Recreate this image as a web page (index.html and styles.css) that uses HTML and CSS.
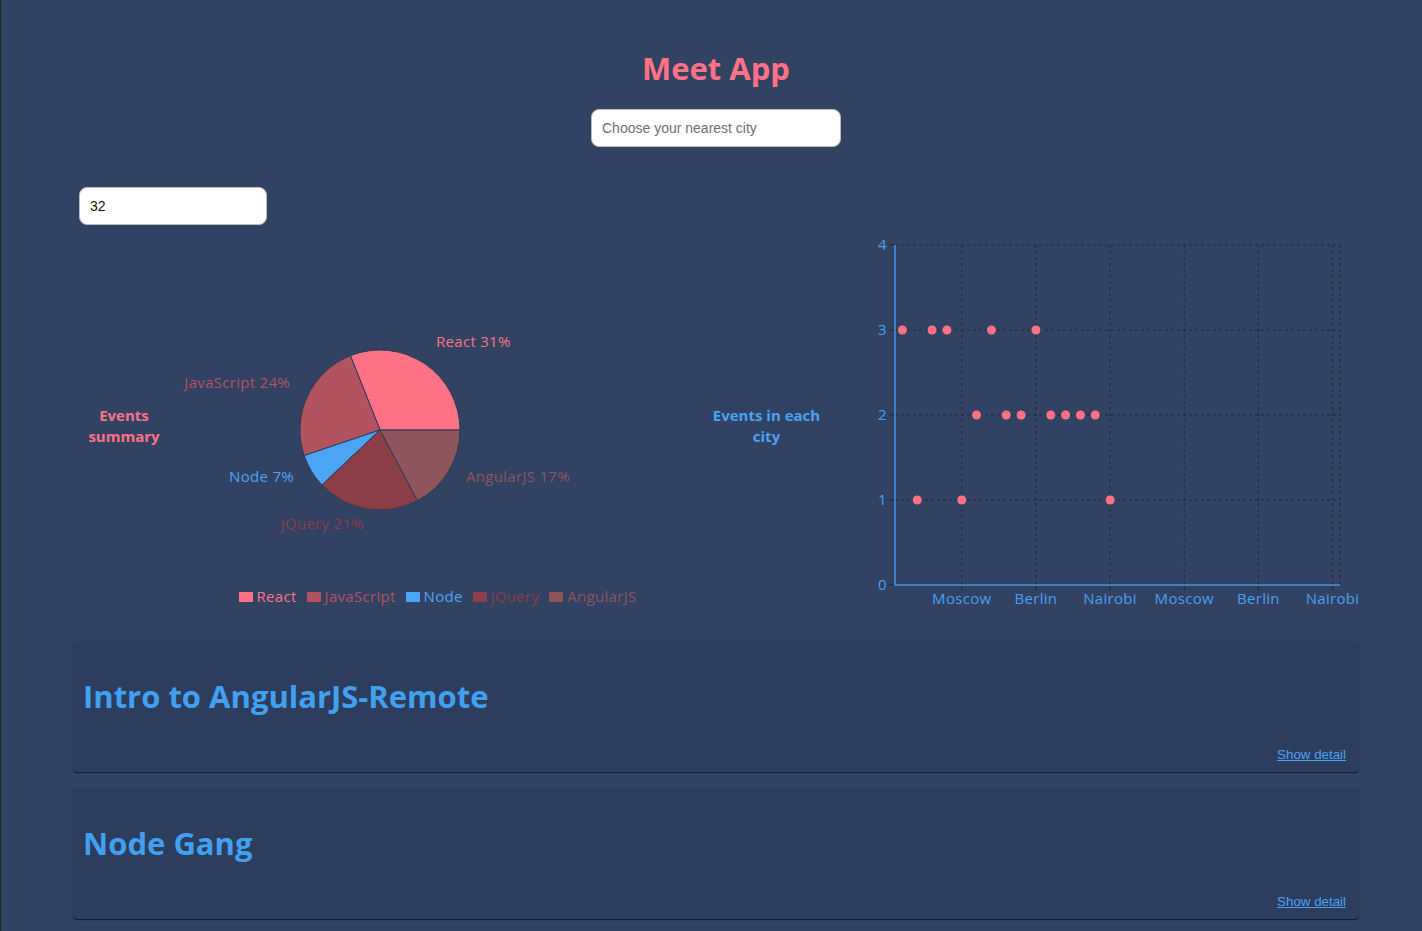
FILE: index.html
```html
<!DOCTYPE html>
<html lang="en">
<head>
<meta charset="utf-8">
<title>Meet App</title>
<link rel="stylesheet" href="styles.css">
</head>
<body>
<div class="app">
  <h1 class="app-title">Meet App</h1>
  <div class="city-search">
    <input class="city" type="text" placeholder="Choose your nearest city">
  </div>
  <div class="number-of-events">
    <input class="number" type="text" value="32">
  </div>

  <div class="charts">
    <div class="chart-block chart-block-left">
      <div class="chart-label label-pink">Events summary</div>
      <div class="pie-chart">
        <svg class="pie-svg" width="537" height="361" viewBox="0 0 537 361">
          <g class="slices" stroke="#2d3c58" stroke-width="1">
            <path d="M205,205 L285,205 A80,80 0 0 0 175.39,130.68 Z" fill="#ff7285"/>
            <path d="M205,205 L175.39,130.68 A80,80 0 0 0 129.19,230.54 Z" fill="#b3535f"/>
            <path d="M205,205 L129.19,230.54 A80,80 0 0 0 146.92,260.02 Z" fill="#4aa5f5"/>
            <path d="M205,205 L146.92,260.02 A80,80 0 0 0 242.47,275.68 Z" fill="#8b3d48"/>
            <path d="M205,205 L242.47,275.68 A80,80 0 0 0 285,205 Z" fill="#8f555d"/>
          </g>
          <g class="pie-labels">
            <text x="261" y="116" text-anchor="start" dominant-baseline="central" fill="#ff7285">React 31%</text>
            <text x="115" y="157" text-anchor="end" dominant-baseline="central" fill="#b3535f">JavaScript 24%</text>
            <text x="119" y="251" text-anchor="end" dominant-baseline="central" fill="#4aa5f5">Node 7%</text>
            <text x="189" y="298" text-anchor="end" dominant-baseline="central" fill="#8b3d48">jQuery 21%</text>
            <text x="291" y="251" text-anchor="start" dominant-baseline="central" fill="#8f555d">AngularJS 17%</text>
          </g>
        </svg>
        <ul class="legend">
          <li class="legend-item c-react"><span class="swatch"></span>React</li>
          <li class="legend-item c-js"><span class="swatch"></span>JavaScript</li>
          <li class="legend-item c-node"><span class="swatch"></span>Node</li>
          <li class="legend-item c-jquery"><span class="swatch"></span>jQuery</li>
          <li class="legend-item c-angular"><span class="swatch"></span>AngularJS</li>
        </ul>
      </div>
    </div>

    <div class="chart-block chart-block-right">
      <div class="chart-label label-blue">Events in each city</div>
      <svg class="scatter-svg" width="536" height="400" viewBox="0 0 536 400">
        <g class="grid" stroke="#1b2232" stroke-opacity="0.75" stroke-dasharray="3 3" stroke-width="1">
          <line x1="72" y1="20" x2="517" y2="20"/>
          <line x1="72" y1="105" x2="517" y2="105"/>
          <line x1="72" y1="190" x2="517" y2="190"/>
          <line x1="72" y1="275" x2="517" y2="275"/>
          <line x1="138.75" y1="20" x2="138.75" y2="360"/>
          <line x1="212.92" y1="20" x2="212.92" y2="360"/>
          <line x1="287.08" y1="20" x2="287.08" y2="360"/>
          <line x1="361.25" y1="20" x2="361.25" y2="360"/>
          <line x1="435.42" y1="20" x2="435.42" y2="360"/>
          <line x1="509.58" y1="20" x2="509.58" y2="360"/>
          <line x1="517" y1="20" x2="517" y2="360"/>
        </g>
        <g class="ticks" stroke="#1b2232" stroke-opacity="0.75" stroke-width="1">
          <line x1="66" y1="20" x2="72" y2="20"/>
          <line x1="66" y1="105" x2="72" y2="105"/>
          <line x1="66" y1="190" x2="72" y2="190"/>
          <line x1="66" y1="275" x2="72" y2="275"/>
          <line x1="66" y1="360" x2="72" y2="360"/>
          <line x1="138.75" y1="360" x2="138.75" y2="366"/>
          <line x1="212.92" y1="360" x2="212.92" y2="366"/>
          <line x1="287.08" y1="360" x2="287.08" y2="366"/>
          <line x1="361.25" y1="360" x2="361.25" y2="366"/>
          <line x1="435.42" y1="360" x2="435.42" y2="366"/>
          <line x1="509.58" y1="360" x2="509.58" y2="366"/>
        </g>
        <g class="axes" stroke="#3d7fc8" stroke-width="2">
          <line x1="72" y1="20" x2="72" y2="361"/>
          <line x1="71" y1="360" x2="517" y2="360"/>
        </g>
        <g class="axis-text y-text" fill="#4aa0ee" text-anchor="end">
          <text x="64" y="20" dy="0.355em">4</text>
          <text x="64" y="105" dy="0.355em">3</text>
          <text x="64" y="190" dy="0.355em">2</text>
          <text x="64" y="275" dy="0.355em">1</text>
          <text x="64" y="360" dy="0.355em">0</text>
        </g>
        <g class="axis-text x-text" fill="#4aa0ee" text-anchor="middle">
          <text x="138.75" y="368" dy="0.71em">Moscow</text>
          <text x="212.92" y="368" dy="0.71em">Berlin</text>
          <text x="287.08" y="368" dy="0.71em">Nairobi</text>
          <text x="361.25" y="368" dy="0.71em">Moscow</text>
          <text x="435.42" y="368" dy="0.71em">Berlin</text>
          <text x="509.58" y="368" dy="0.71em">Nairobi</text>
        </g>
        <g class="points" fill="#ff7285">
          <circle cx="79.42" cy="105" r="4.5"/>
          <circle cx="94.25" cy="275" r="4.5"/>
          <circle cx="109.08" cy="105" r="4.5"/>
          <circle cx="123.92" cy="105" r="4.5"/>
          <circle cx="138.75" cy="275" r="4.5"/>
          <circle cx="153.58" cy="190" r="4.5"/>
          <circle cx="168.42" cy="105" r="4.5"/>
          <circle cx="183.25" cy="190" r="4.5"/>
          <circle cx="198.08" cy="190" r="4.5"/>
          <circle cx="212.92" cy="105" r="4.5"/>
          <circle cx="227.75" cy="190" r="4.5"/>
          <circle cx="242.58" cy="190" r="4.5"/>
          <circle cx="257.42" cy="190" r="4.5"/>
          <circle cx="272.25" cy="190" r="4.5"/>
          <circle cx="287.08" cy="275" r="4.5"/>
        </g>
      </svg>
    </div>
  </div>

  <ul class="event-list">
    <li class="event">
      <h2 class="event-title">Intro to AngularJS-Remote</h2>
      <div class="event-actions"><a class="details-link" href="#">Show detail</a></div>
    </li>
    <li class="event">
      <h2 class="event-title">Node Gang</h2>
      <div class="event-actions"><a class="details-link" href="#">Show detail</a></div>
    </li>
  </ul>
</div>
</body>
</html>
```
FILE: styles.css
```css
html {
  background: #314263;
}

body {
  margin: 0;
  padding: 0 0 0 10px;
  min-height: 100vh;
  background: #314263;
  box-shadow: inset 1px 0 0 #1f2226;
  font-family: "Open Sans", "Lato", sans-serif;
}

.app {
  width: 1286px;
  margin: 0 auto;
}

.app-title {
  margin: 48px 0 21px;
  font-size: 31px;
  line-height: 40px;
  font-weight: 700;
  color: #ff7286;
  text-align: center;
}

.city-search {
  display: flex;
  justify-content: center;
}

.city,
.number {
  box-sizing: border-box;
  height: 38px;
  padding: 0 10px;
  border: 1px solid #b9bcc2;
  border-radius: 8px;
  background: #fff;
  font-family: "Liberation Sans", Arial, sans-serif;
  font-size: 14px;
  color: #111;
  outline: none;
}

.city {
  width: 250px;
}

.city::placeholder {
  color: #6f6f6f;
}

.number-of-events {
  margin-top: 40px;
  padding-left: 6px;
}

.number {
  width: 188px;
}

.charts {
  display: flex;
  height: 400px;
}

.chart-block {
  display: flex;
  align-items: center;
}

.chart-block-left {
  width: 637px;
}

.chart-block-right {
  width: 649px;
}

.chart-label {
  flex: none;
  font-size: 15px;
  line-height: 21px;
  font-weight: 700;
  text-align: center;
  margin-top: 2px;
}

.chart-block-left .chart-label {
  width: 102px;
}

.chart-block-right .chart-label {
  width: 113px;
}

.label-pink {
  color: #ff7286;
}

.label-blue {
  color: #4aa3f2;
}

.pie-chart {
  align-self: flex-start;
  display: flex;
  flex-direction: column;
  width: 535px;
}

.pie-svg,
.scatter-svg {
  display: block;
  font-family: "Open Sans", "Lato", sans-serif;
  font-size: 15px;
  letter-spacing: 0.3px;
}

.legend {
  display: flex;
  justify-content: center;
  margin: 0;
  padding: 0 10px 0 0;
  list-style: none;
  font-size: 15px;
  letter-spacing: 0.3px;
  line-height: 20px;
}

.legend-item {
  display: flex;
  align-items: center;
  margin-right: 10px;
}

.legend-item:last-child {
  margin-right: 0;
}

.swatch {
  width: 14px;
  height: 10px;
  margin-right: 4px;
  margin-top: 1px;
}

.c-react { color: #ff7285; }
.c-react .swatch { background: #ff7285; }
.c-js { color: #b3535f; }
.c-js .swatch { background: #b3535f; }
.c-node { color: #4aa5f5; }
.c-node .swatch { background: #4aa5f5; }
.c-jquery { color: #8b3d48; }
.c-jquery .swatch { background: #8b3d48; }
.c-angular { color: #8f555d; }
.c-angular .swatch { background: #8f555d; }

.event-list {
  margin: 16px 0 0;
  padding: 0;
  list-style: none;
}

.event {
  margin-bottom: 16px;
  padding: 10px 13px 10px 10px;
  border-radius: 4px;
  background: #2c3d5d;
  box-shadow: 0 1px 1px rgba(10, 14, 22, 0.75);
}

.event-title {
  margin: 25px 0 30px;
  font-size: 31px;
  line-height: 40px;
  font-weight: 700;
  color: #42a0f0;
}

.event-actions {
  display: flex;
  justify-content: flex-end;
}

.details-link {
  font-family: "Liberation Sans", Arial, sans-serif;
  font-size: 13.33px;
  line-height: 16px;
  margin-top: 1px;
  margin-bottom: -1px;
  color: #4aa3f2;
  text-decoration: underline;
}
```
